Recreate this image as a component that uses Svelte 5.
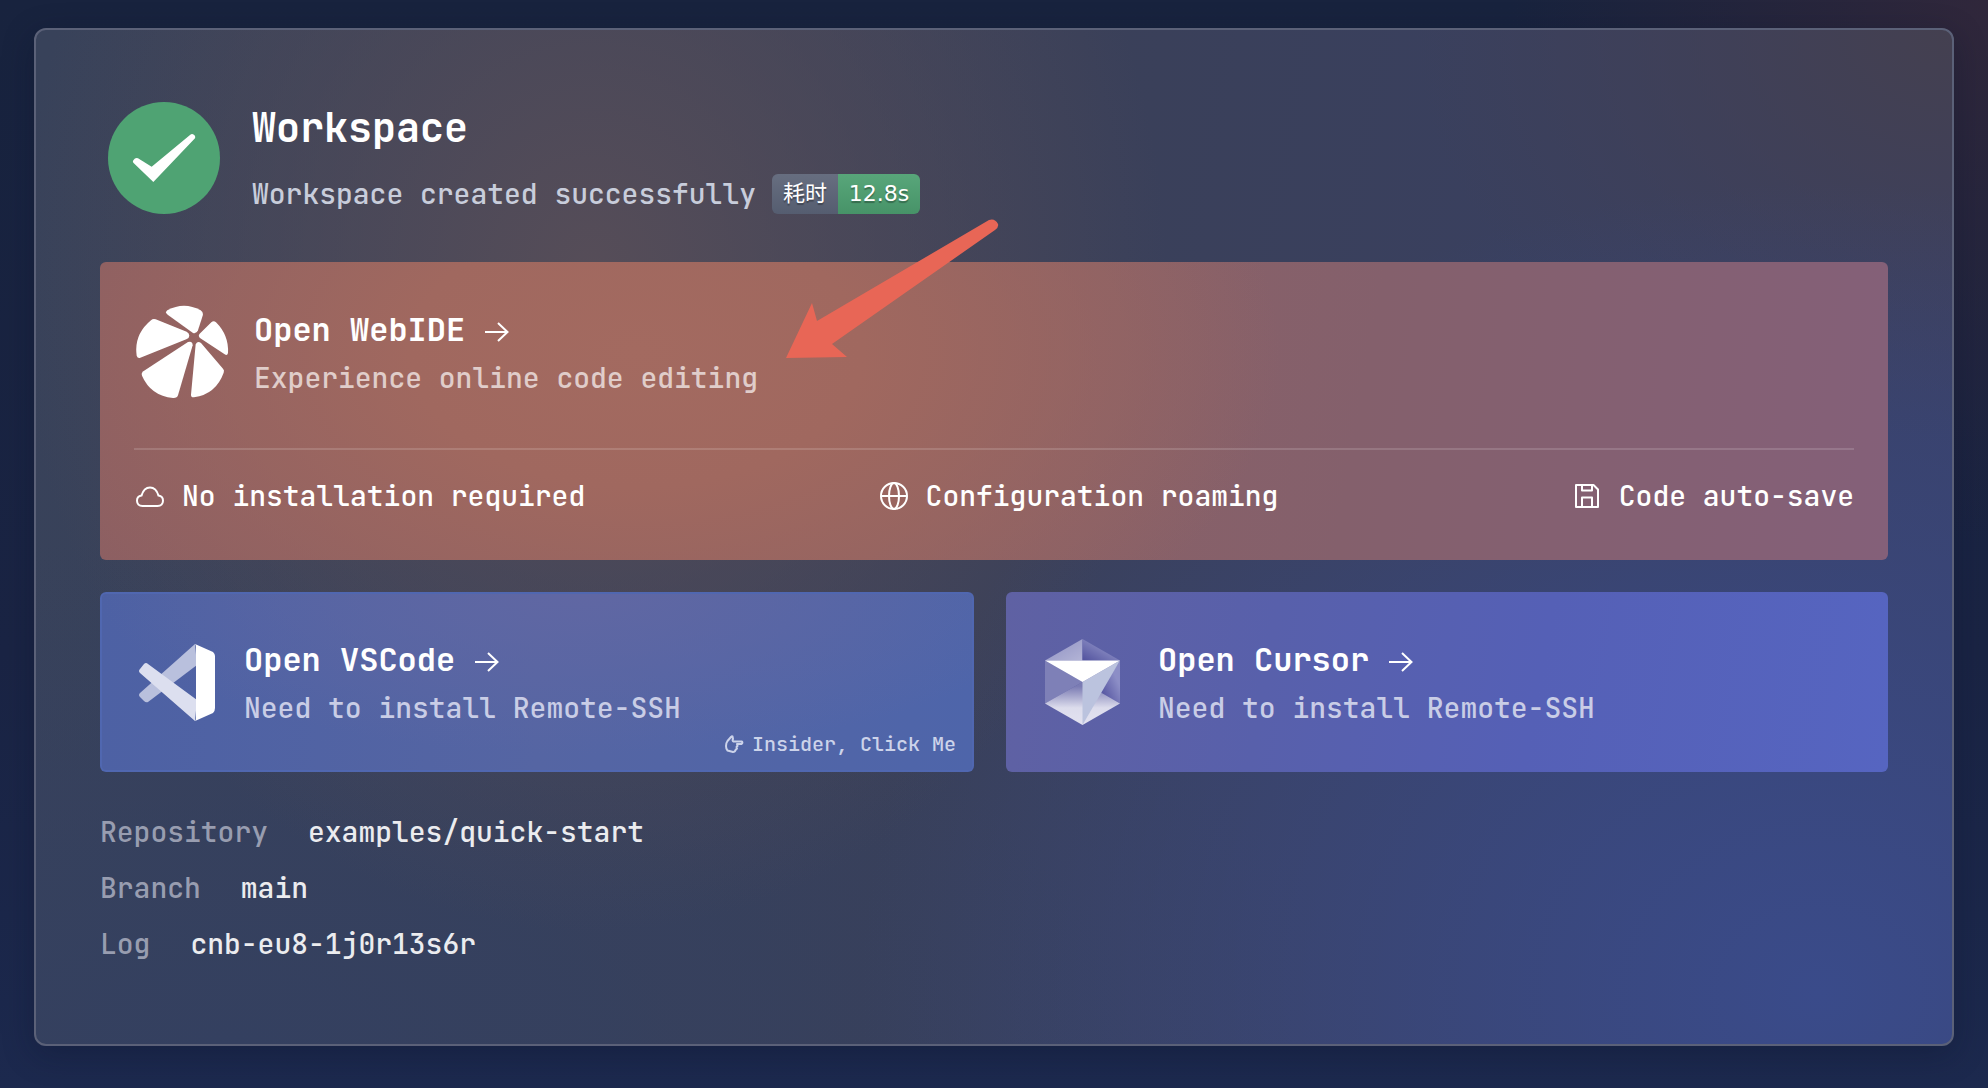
<script lang="ts">
    const features = [
        { icon: 'cloud', label: 'No installation required' },
        { icon: 'globe', label: 'Configuration roaming' },
        { icon: 'save', label: 'Code auto-save' },
    ];

    const details = [
        { name: 'Repository', value: 'examples/quick-start' },
        { name: 'Branch', value: 'main' },
        { name: 'Log', value: 'cnb-eu8-1j0r13s6r' },
    ];
</script>

{#snippet arrow()}
    <svg class="arrow" viewBox="0 0 24 20" aria-hidden="true">
        <path d="M0 10H22.500M13 1l9.500 9L13 19" />
    </svg>
{/snippet}

<main class="page">
    <section class="panel">
        <header class="status">
            <svg class="status-icon" viewBox="0 0 336 336" aria-hidden="true">
                <circle cx="168" cy="168" r="168" fill="#4fa373" />
                <path d="M76 175q6-9 14-6l41 25 115-95q5-4 9-2 9 4 6 12L136 240 76 182q-3-3 0-7z" fill="#fff" />
            </svg>
            <div class="status-text">
                <h1>Workspace</h1>
                <div class="status-line">
                    <span>Workspace created successfully</span>
                    <span class="badge">
                        <span class="badge-label">耗时</span>
                        <span class="badge-value">12.8s</span>
                    </span>
                </div>
            </div>
        </header>

        <div class="webide-wrap">
            <a class="card webide" href="#webide">
                <span class="card-main">
                    <svg class="logo-webide" viewBox="12 12 288 288" aria-hidden="true">
                        <path d="M112 31Q162 4 212 31Q221 37 218 47L204 91Q200 102 189 99L113 44Q104 37 112 31Z" />
                        <path d="M63 61Q69 55 77 58L170 95Q178 99 178 107Q178 114 169 118L31 173Q23 176 20 167Q11 104 63 61Z" />
                        <path d="M244 67Q251 60 258 67Q297 106 294 159Q292 168 284 163L211 115Q203 108 209 101Z" />
                        <path d="M174 126Q188 122 188 136L144 286Q141 295 129 294Q62 287 36 227Q33 219 40 214Z" />
                        <path d="M197 133Q203 121 213 129L279 206Q284 211 281 218Q258 282 192 292Q183 293 183 284Z" />
                    </svg>
                    <span class="card-text">
                        <span class="card-title">Open WebIDE {@render arrow()}</span>
                        <span class="card-sub">Experience online code editing</span>
                    </span>
                </span>
                <span class="features">
                    {#each features as feature}
                        <span class="feature">
                            <svg viewBox="0 0 32 32" aria-hidden="true">
                                {#if feature.icon === 'cloud'}
                                    <path d="M8.500 26C5 26 3 23.700 3 20.800C3 18 5 16 7.500 15.600C9 10.500 12 7.500 16 7.500S23 10.500 24.500 15.600C27 16 29 18 29 20.800C29 23.700 27 26 23.500 26Z" />
                                {:else if feature.icon === 'globe'}
                                    <circle cx="16" cy="16" r="13" />
                                    <ellipse cx="16" cy="16" rx="5" ry="13" />
                                    <path d="M3 16H29" />
                                {:else}
                                    <path d="M5 5H22.500L27 9.500V27H5ZM11 5V10.500H21V5M11 27V17.500H21V27" />
                                {/if}
                            </svg>
                            {feature.label}
                        </span>
                    {/each}
                </span>
            </a>
            <svg class="pointer" viewBox="0 0 214 142" aria-hidden="true">
                <path d="M0 140L26 85L31 103L203 2Q209 0 212 6Q213 9 209 12L46 126L61 139Z" fill="#e86656" />
            </svg>
        </div>

        <div class="editors">
            <div class="editor-wrap">
                <a class="card editor vscode" href="#vscode">
                    <svg class="logo-vscode" viewBox="0 0 84 84" aria-hidden="true">
                        <path d="M59 2L61 23L12 60Q10 61 8 59L4 55Q2 53 4 51Z" fill="#b9c0dd" />
                        <path d="M4 31Q2 29 4 27L8 22Q10 20 12 22L61 58L59 79Z" fill="#dcdfef" />
                        <path d="M59 2L77 10Q79 12 79 14V66Q79 69 77 71L59 79Q60 78 60 76V5Q60 3 59 2Z" fill="#fff" />
                    </svg>
                    <span class="card-text">
                        <span class="card-title">Open VSCode {@render arrow()}</span>
                        <span class="card-sub">Need to install Remote-SSH</span>
                    </span>
                </a>
                <a class="insider" href="#insider">
                    <svg viewBox="0 0 20 20" aria-hidden="true">
                        <path d="M8.500 2.500Q7.500 2 7 3L3.500 7Q2 9 2 12Q2 15 3.500 16.500L9 18Q11 18 11.500 16L13 14.500L12.500 13L13.500 12L13 10H17.500Q19 9 18 7.500H9.500Q8 7 9 5Z" />
                    </svg>
                    Insider, Click Me
                </a>
            </div>
            <a class="card editor cursor" href="#cursor">
                <svg class="logo-cursor" viewBox="0 0 92 92" aria-hidden="true">
                    <defs>
                        <linearGradient id="facet-right" x1="0" y1="1" x2="1" y2="0">
                            <stop offset="0.050" stop-color="#5556a0" />
                            <stop offset="0.600" stop-color="#8587c0" />
                        </linearGradient>
                        <linearGradient id="facet-side" x1="0" y1="1" x2="1" y2="0">
                            <stop offset="0.200" stop-color="#5a5aa4" />
                            <stop offset="0.700" stop-color="#8c8ec6" />
                        </linearGradient>
                        <linearGradient id="facet-left" x1="0" y1="0" x2="1" y2="1">
                            <stop offset="0" stop-color="#8d8fc2" />
                            <stop offset="1" stop-color="#b3b4d6" />
                        </linearGradient>
                        <linearGradient id="facet-bottom" x1="0" y1="0" x2="0" y2="1">
                            <stop offset="0.100" stop-color="#7a7bb3" />
                            <stop offset="0.600" stop-color="#dcdcec" />
                            <stop offset="1" stop-color="#e2e2f0" />
                        </linearGradient>
                    </defs>
                    <path d="M40.500 1L3 22.500H40.500Z" fill="url(#facet-left)" />
                    <path d="M40.500 1L78 22.500H40.500Z" fill="url(#facet-right)" />
                    <path d="M3 22.500L40.500 44L3 65.500Z" fill="#7e80b7" />
                    <path d="M78 22.500V65.500L58 54Z" fill="url(#facet-side)" />
                    <path d="M3 65.500L40.500 44L78 65.500L40.500 87Z" fill="url(#facet-bottom)" />
                    <path d="M78 22.500L40.500 44V87Z" fill="#bbc3de" />
                    <path d="M3 22.500H78L40.500 44Z" fill="#fff" />
                </svg>
                <span class="card-text">
                    <span class="card-title">Open Cursor {@render arrow()}</span>
                    <span class="card-sub">Need to install Remote-SSH</span>
                </span>
            </a>
        </div>

        <dl class="details">
            {#each details as item}
                <div class="detail">
                    <dt>{item.name}</dt>
                    <dd>{item.value}</dd>
                </div>
            {/each}
        </dl>
    </section>
</main>

<style>
    :global(body) {
        margin: 0;
        background: #1a2444;
    }
    .page {
        box-sizing: border-box;
        min-height: 100vh;
        padding: 28px 34px 42px;
        background:
            radial-gradient(ellipse 24% 50% at 100% 0%, #30273b 0%, #30273b00 100%),
            linear-gradient(180deg, #18233e 0%, #1a2444 60%, #1c294e 100%);
        font-family: "JetBrains Mono", "DejaVu Sans Mono", monospace;
        font-size: 28px;
        font-weight: 500;
        line-height: 40px;
        color: #fff;
    }
    .panel {
        padding: 72px 64px;
        border: 2px solid #5b6178;
        border-radius: 12px;
        background:
            radial-gradient(ellipse 30% 65% at 29% 24%, #564d58 0%, #564d5800 100%),
            radial-gradient(ellipse 50% 80% at 93% 95%, #3a4b8a 0%, #3a4b8a00 100%),
            radial-gradient(ellipse 28% 40% at 100% 0%, #444050 0%, #44405000 100%),
            radial-gradient(ellipse 60% 50% at 10% 100%, #344060 0%, #34406000 100%),
            linear-gradient(100deg, #38425a 0%, #3a4059 50%, #394066 100%);
        box-shadow: 0 8px 32px rgba(10, 16, 40, 0.3);
    }

    .status {
        display: flex;
        align-items: center;
        gap: 32px;
        margin-bottom: 48px;
        padding-left: 8px;
    }
    .status-icon {
        width: 112px;
        height: 112px;
    }
    .status-text {
        display: flex;
        flex-direction: column;
        gap: 20px;
    }
    h1 {
        margin: 0;
        font-size: 40px;
        line-height: 52px;
        font-weight: 700;
    }
    .status-line {
        display: flex;
        gap: 16px;
        color: #c8cddb;
    }
    .badge {
        display: flex;
        border-radius: 6px;
        overflow: hidden;
        font-family: Verdana, "DejaVu Sans", "Noto Sans CJK SC", sans-serif;
        font-size: 22px;
        font-weight: 400;
        color: #fff;
        text-shadow: 0 2px 1px rgba(0, 0, 0, 0.3);
    }
    .badge-label {
        width: 66px;
        text-align: center;
        background: linear-gradient(#676e80, #555d70);
    }
    .badge-value {
        width: 82px;
        text-align: center;
        background: linear-gradient(#58a67a, #479368);
    }

    .card {
        box-sizing: border-box;
        border-radius: 6px;
        color: #fff;
        text-decoration: none;
    }
    .card-text {
        display: flex;
        flex-direction: column;
        line-height: 48px;
    }
    .card-title {
        display: flex;
        align-items: center;
        gap: 20px;
        font-size: 32px;
        font-weight: 700;
    }
    .arrow {
        width: 24px;
        height: 20px;
        margin-top: 4px;
        fill: none;
        stroke: #fff;
        stroke-width: 2;
    }

    .webide-wrap {
        position: relative;
        margin-bottom: 32px;
    }
    .webide {
        display: block;
        padding: 0 34px;
        background:
            radial-gradient(ellipse 36% 130% at 30% 30%, #a36a60 0%, #a0685f 35%, #a0685f00 100%),
            linear-gradient(100deg, #8c5f62 0%, #8c6163 45%, #84606c 70%, #846079 100%);
    }
    .webide .card-sub {
        color: #e0cdca;
    }
    .card-main {
        display: flex;
        gap: 24px;
        padding: 42px 0 46px;
        border-bottom: 2px solid rgba(255, 255, 255, 0.15);
    }
    .card-main .card-text {
        padding-top: 2px;
    }
    .logo-webide {
        width: 96px;
        height: 96px;
        fill: #fff;
    }
    .features {
        display: flex;
        justify-content: space-between;
        padding: 26px 0 44px;
    }
    .feature {
        display: flex;
        align-items: center;
        gap: 16px;
    }
    .feature svg {
        width: 32px;
        height: 32px;
        fill: none;
        stroke: #fff;
        stroke-width: 2;
        stroke-linejoin: round;
    }
    .pointer {
        position: absolute;
        left: 686px;
        top: -44px;
        width: 214px;
        height: 142px;
        pointer-events: none;
    }

    .editors {
        display: grid;
        grid-template-columns: 437fr 441fr;
        gap: 32px;
        margin-bottom: 32px;
    }
    .editor-wrap {
        position: relative;
    }
    .editor {
        display: flex;
        align-items: center;
        gap: 24px;
        padding: 44px 36px 40px;
    }
    .editor .card-sub {
        color: #c9cde6;
    }
    .vscode {
        background:
            radial-gradient(ellipse 55% 90% at 55% 0%, #6067a3 0%, #6067a300 100%),
            linear-gradient(90deg, #4d61a4 0%, #5565a3 50%, #4e65aa 100%);
        box-shadow: inset 0 0 0 2px #5067b0;
    }
    .cursor {
        background: linear-gradient(100deg, #5f61a3 0%, #5860ab 30%, #5560b6 60%, #5665c1 100%);
    }
    .logo-vscode {
        width: 84px;
        height: 84px;
    }
    .logo-cursor {
        width: 92px;
        height: 92px;
    }
    .insider {
        position: absolute;
        right: 18px;
        bottom: 16px;
        display: flex;
        align-items: center;
        gap: 8px;
        font-size: 20px;
        line-height: 24px;
        color: #ccd3ea;
        text-decoration: none;
    }
    .insider svg {
        width: 20px;
        height: 20px;
        fill: none;
        stroke: currentColor;
        stroke-width: 2;
        stroke-linejoin: round;
    }

    .details {
        margin: 0;
        line-height: 56px;
    }
    .detail {
        display: flex;
        gap: 40px;
    }
    dt {
        color: #989db0;
    }
    dd {
        margin: 0;
        color: #ebecef;
    }
</style>
